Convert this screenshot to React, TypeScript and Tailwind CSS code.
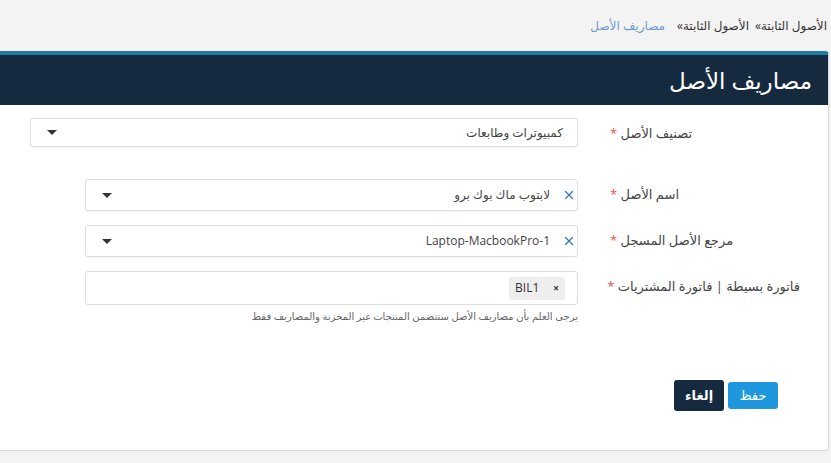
import { X } from 'lucide-react'

const FONT = { fontFamily: '"Open Sans", "DejaVu Sans", sans-serif' }

function Caret() {
  return <span className="h-0 w-0 border-x-[5px] border-t-[5px] border-x-transparent border-t-[#333]" />
}

function Label({ text }: { text: string }) {
  return (
    <div className="w-[190px] shrink-0 whitespace-nowrap pt-[6px] text-left text-[13px] text-[#444]">
      {text} <span className="text-[#e0584b]">*</span>
    </div>
  )
}

function SelectBox({
  width,
  value,
  clearable,
  height,
}: {
  width: string
  value: string
  clearable?: boolean
  height: string
}) {
  return (
    <div
      className={`flex items-center justify-between rounded-[3px] border border-[#ddd] bg-white pl-[16px] shadow-[0_1px_1px_rgba(0,0,0,0.04)] ${clearable ? 'pr-[1px]' : 'pr-[14px]'} ${width} ${height}`}
    >
      <div className="flex items-center gap-[12px]">
        {clearable && <X className="h-[14px] w-[14px] text-[#3776aa]" strokeWidth={2.2} />}
        <span className="text-[12px] text-[#444]">{value}</span>
      </div>
      <Caret />
    </div>
  )
}

export default function App() {
  return (
    <div dir="rtl" className="min-h-[463px] bg-[#f3f3f3]" style={FONT}>
      {/* Breadcrumb */}
      <div className="flex h-[51px] items-center pr-[4px] text-[12px] text-[#333]">
        <span>الأصول الثابتة»</span>
        <span className="mr-[6px]">الأصول الثابتة»</span>
        <span className="mr-[12px] text-[#6b9ad0]">مصاريف الأصل</span>
      </div>

      {/* Card */}
      <div className="mr-[2px] h-[400px] rounded-r-[4px] border-t-4 border-r border-b border-t-[#1f7ba8] border-r-[#d8d8d8] border-b-[#d8d8d8] bg-white">
        <div className="flex h-[50px] items-center bg-[#152a3e] pr-[16px] text-[23px] text-white">
          مصاريف الأصل
        </div>

        <div className="pr-[28px]">
          {/* Row 1 */}
          <div className="mt-[13px] flex gap-[32px]">
            <Label text="تصنيف الأصل" />
            <SelectBox width="w-[548px]" height="h-[29px]" value="كمبيوترات وطابعات" />
          </div>

          {/* Row 2 */}
          <div className="mt-[32px] flex gap-[32px]">
            <Label text="اسم الأصل" />
            <SelectBox width="w-[493px]" height="h-[32px]" value="لابتوب ماك بوك برو" clearable />
          </div>

          {/* Row 3 */}
          <div className="mt-[14px] flex gap-[32px]">
            <Label text="مرجع الأصل المسجل" />
            <SelectBox width="w-[493px]" height="h-[32px]" value="Laptop-MacbookPro-1" clearable />
          </div>

          {/* Row 4 */}
          <div className="mt-[14px] flex gap-[32px]">
            <Label text="فاتورة بسيطة | فاتورة المشتريات" />
            <div>
              <div className="flex h-[34px] w-[493px] items-center rounded-[3px] border border-[#ddd] bg-white pr-[12px]">
                <span className="flex h-[23px] items-center gap-[14px] rounded-[3px] bg-[#eee] px-[6px] text-[12px] text-[#333]">
                  <span className="text-[10px] font-bold">×</span>
                  <span dir="ltr">BIL1</span>
                </span>
              </div>
              <div className="mt-[4px] text-[10px] text-[#666]">
                يرجى العلم بأن مصاريف الأصل ستتضمن المنتجات غير المخزنة والمصاريف فقط
              </div>
            </div>
          </div>

          {/* Buttons */}
          <div className="mt-[56px] mr-[22px] flex items-center gap-[4px]">
            <button className="h-[27px] w-[50px] rounded-[3px] bg-[#1f97de] text-[13px] text-white">حفظ</button>
            <button className="h-[31px] w-[50px] rounded-[3px] bg-[#152a3e] text-[13px] font-bold text-white">إلغاء</button>
          </div>
        </div>
      </div>
    </div>
  )
}
